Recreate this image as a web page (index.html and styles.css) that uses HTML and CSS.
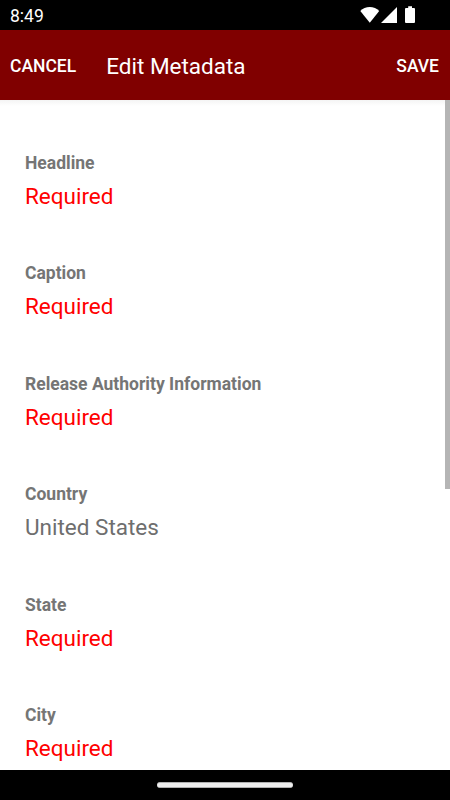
FILE: index.html
```html
<!DOCTYPE html>
<html lang="en">

<head>
    <meta charset="UTF-8">
    <meta name="viewport" content="width=device-width, initial-scale=1.0">
    <title>Edit Metadata</title>
    <link rel="stylesheet" href="styles.css">
</head>

<body>
    <div class="status-bar">
        <span class="time">8:49</span>
        <svg class="status-icons" width="56" height="18" viewBox="0 0 56 18" fill="#fff">
            <!-- wifi -->
            <path d="M0.300 5C5 -0.200 14.500 -0.200 19.200 5L9.800 16.800Z" />
            <!-- signal -->
            <path d="M21 17L37 1V17Z" />
            <!-- battery -->
            <path d="M48.200 .3h3.800v1.700h2a1 1 0 0 1 1 1v13a1 1 0 0 1-1 1h-8a1 1 0 0 1-1-1V3a1 1 0 0 1 1-1h2.200z" />
        </svg>
    </div>

    <header class="toolbar">
        <button class="action">CANCEL</button>
        <h1>Edit Metadata</h1>
        <button class="action save">SAVE</button>
    </header>

    <main class="form">
        <div class="field">
            <h2>Headline</h2>
            <p class="required">Required</p>
        </div>
        <div class="field">
            <h2>Caption</h2>
            <p class="required">Required</p>
        </div>
        <div class="field">
            <h2>Release Authority Information</h2>
            <p class="required">Required</p>
        </div>
        <div class="field">
            <h2>Country</h2>
            <p>United States</p>
        </div>
        <div class="field">
            <h2>State</h2>
            <p class="required">Required</p>
        </div>
        <div class="field">
            <h2>City</h2>
            <p class="required">Required</p>
        </div>
        <div class="scrollbar"></div>
    </main>

    <div class="nav-bar">
        <div class="handle"></div>
    </div>
</body>

</html>
```

FILE: styles.css
```css
body {
  margin: 0;
  height: 100vh;
  display: flex;
  flex-direction: column;
  overflow: hidden;
  background: #fff;
  font-family: Roboto, sans-serif;
}
h1, h2, p {
  margin: 0;
  font-weight: 400;
}
.status-bar {
  flex: none;
  height: 30px;
  padding: 0 34px 0 10px;
  box-sizing: border-box;
  display: flex;
  align-items: center;
  justify-content: space-between;
  background: #000;
  color: #fff;
}
.time {
  padding-top: 2px;
  font-size: 17.5px;
}
/* Top toolbar */
.toolbar {
  flex: none;
  height: 70px;
  padding: 0 11px 0 10px;
  box-sizing: border-box;
  display: flex;
  align-items: center;
  background: #800000;
  color: #fff;
}
.toolbar h1 {
  margin-left: 30px;
  font-size: 22.5px;
  line-height: 30px;
  padding-top: 1px;
}
.action {
  padding: 2px 0 0;
  border: none;
  background: none;
  color: #fff;
  font: 500 17.5px Roboto, sans-serif;
}
.save {
  margin-left: auto;
}
/* Metadata fields */
.form {
  flex: 1;
  min-height: 0;
  position: relative;
  overflow: hidden;
  padding: 50px 25px 0;
  background: linear-gradient(#f4f4f4, #fff 6px);
}
.field {
  height: 110.4px;
}
.field h2 {
  font-size: 17.5px;
  font-weight: 700;
  line-height: 26px;
  color: #757575;
}
.field p {
  margin-top: 5px;
  font-size: 22.5px;
  line-height: 30px;
  color: #6e6e6e;
}
.field .required {
  color: #f00;
}
.scrollbar {
  position: absolute;
  top: 0;
  right: 0;
  width: 5px;
  height: 389px;
  background: #b5b5b5;
}
/* Bottom gesture bar */
.nav-bar {
  flex: none;
  height: 30px;
  display: flex;
  align-items: center;
  justify-content: center;
  background: #000;
}
.handle {
  width: 136px;
  height: 6px;
  box-sizing: border-box;
  border: 1px solid #b0b0b0;
  border-width: 1px 0;
  border-radius: 3px;
  background: #eee;
}
```
